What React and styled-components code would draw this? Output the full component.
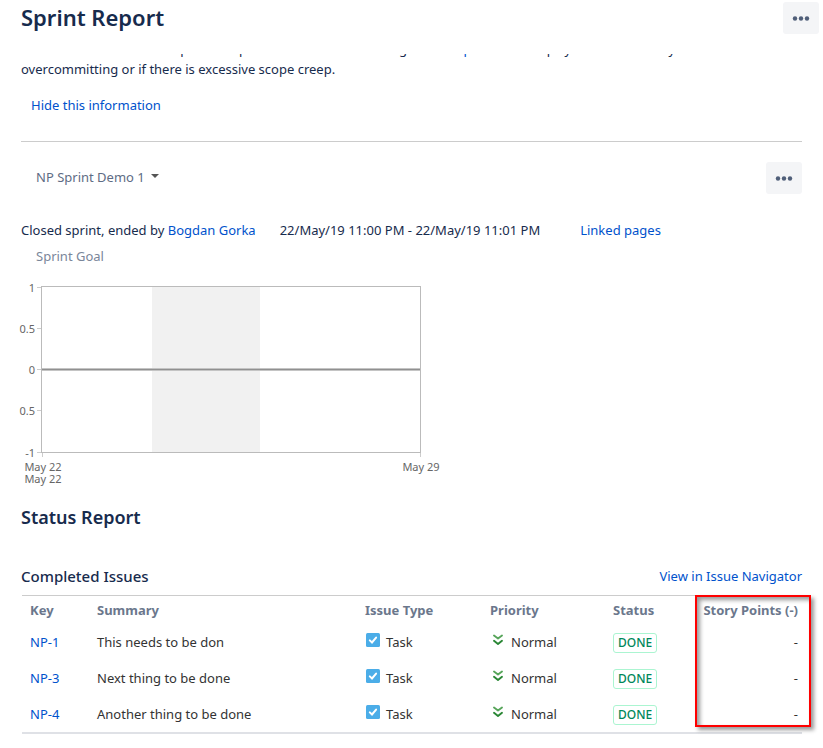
import React from 'react';
import styled, { createGlobalStyle } from 'styled-components';

const GlobalStyle = createGlobalStyle`
  *, *::before, *::after { box-sizing: border-box; }
  body {
    margin: 0;
    background: #fff;
    color: #172b4d;
    font: 13px/20px "Noto Sans", "Open Sans", sans-serif;
  }
  h1, h2, h3, p { margin: 0; }
`;

const Page = styled.div`
  padding: 2px 4px 12px 21px;
`;

const PageHeader = styled.header`
  display: flex;
  justify-content: space-between;
  align-items: flex-start;
  height: 52px;
`;

const PageTitle = styled.h1`
  font-size: 22px;
  font-weight: 600;
  line-height: 30px;
`;

const Body = styled.main`
  padding-right: 17px;
`;

const MoreButton = styled.button`
  display: flex;
  align-items: center;
  justify-content: center;
  width: 36px;
  height: 32px;
  padding: 0;
  border: 0;
  border-radius: 3px;
  background: #f4f5f7;
  color: #505f79;
  cursor: pointer;
`;

const Link = styled.a`
  color: #0052cc;
  text-decoration: none;
  &:hover { text-decoration: underline; }
`;

const InfoPanel = styled.section`
  overflow: hidden;
  padding-bottom: 26px;
  border-bottom: 1px solid #ccc;
`;

const InfoText = styled.p`
  margin-top: -15px;
  margin-bottom: 16px;
`;

const HideLink = styled(Link)`
  display: inline-block;
  margin-left: 10px;
`;

const SprintBar = styled.div`
  display: flex;
  justify-content: space-between;
  align-items: flex-start;
  padding: 20px 0 26px;
`;

const SprintPicker = styled.button`
  display: flex;
  align-items: center;
  gap: 6px;
  padding: 5px 15px;
  border: 0;
  background: none;
  color: #5e6c84;
  font: inherit;
  cursor: pointer;
`;

const SprintMeta = styled.div`
  display: flex;
  flex-wrap: wrap;
`;

const MetaItem = styled.span`
  margin-right: ${(p) => p.$gap}px;
`;

const SprintGoal = styled.p`
  margin: 6px 15px 0;
  color: #7a869a;
`;

const Chart = styled.svg`
  display: block;
  margin: 16px 0 14px;
  overflow: visible;
  font-size: 11px;
  fill: #666;
`;

const SectionTitle = styled.h2`
  font-size: 18px;
  font-weight: 600;
  line-height: 28px;
`;

const TableHeading = styled.div`
  display: flex;
  justify-content: space-between;
  align-items: center;
  margin-top: 35px;
  padding-bottom: 9px;
`;

const TableTitle = styled.h3`
  font-size: 15px;
  font-weight: 500;
  line-height: 20px;
`;

const TableFrame = styled.div`
  position: relative;
  margin-left: 1px;
`;

const IssueTable = styled.table`
  width: 100%;
  border-collapse: separate;
  border-spacing: 0;
  border-top: 1px solid #ccc;
  border-bottom: 2px solid #dfe1e6;
  table-layout: fixed;
`;

const Col = styled.col`
  width: ${(p) => (p.$width ? `${p.$width}px` : 'auto')};
`;

const HeadCell = styled.th`
  height: 28px;
  padding: 0 4px 0 8px;
  color: #6b778c;
  font-weight: 700;
  text-align: ${(p) => (p.$end ? 'right' : 'left')};
  white-space: nowrap;
  ${(p) => p.$end && 'padding-left: 0;'}
`;

const Cell = styled.td`
  height: 36px;
  padding: 0 4px 0 8px;
  color: #333;
  text-align: ${(p) => (p.$end ? 'right' : 'left')};
`;

const IconLabel = styled.span`
  display: flex;
  align-items: center;
  gap: 6px;
  svg { margin-bottom: 4px; }
`;

const Lozenge = styled.span`
  display: inline-block;
  padding: 0 4px;
  border: 1px solid #abf5d1;
  border-radius: 3px;
  color: #00875a;
  font-size: 12px;
  font-weight: 500;
  line-height: 18px;
  vertical-align: middle;
`;

const Highlight = styled.div`
  position: absolute;
  top: 0;
  right: -9px;
  bottom: 7px;
  width: 116px;
  border: 2px solid #f00;
  box-shadow: 3px 3px 4px rgba(0, 0, 0, 0.4), inset 3px 3px 4px rgba(0, 0, 0, 0.4);
  pointer-events: none;
`;

function Dots() {
  return (
    <svg width="18" height="6" viewBox="0 0 18 6" fill="currentColor" aria-hidden="true">
      <circle cx="3" cy="3.5" r="2.2" />
      <circle cx="9" cy="3.5" r="2.2" />
      <circle cx="15" cy="3.5" r="2.2" />
    </svg>
  );
}

function Caret() {
  return (
    <svg width="8" height="6" viewBox="0 0 8 6" aria-hidden="true">
      <path d="M0 0h8L4 4z" fill="#555" />
    </svg>
  );
}

function TaskIcon() {
  return (
    <svg width="15" height="14" viewBox="0 0 15 14" aria-hidden="true">
      <rect x="1" width="14" height="14" rx="1.5" fill="#4bade8" />
      <path d="M4.8 7.4 7 9.5l4.1-4.9" fill="none" stroke="#fff" strokeWidth="2" strokeLinecap="round" />
    </svg>
  );
}

function PriorityIcon() {
  return (
    <svg width="15" height="12" viewBox="0 0 15 12" fill="none" strokeWidth="1.9" strokeLinecap="round" strokeLinejoin="round" aria-hidden="true">
      <path d="M4 1.5l4 3 4-3" stroke="#57a55a" />
      <path d="M4 6.8l4 3.2 4-3.2" stroke="#2a8735" />
    </svg>
  );
}

const yTicks = [
  { y: 5, label: '1' },
  { y: 46, label: '0.5' },
  { y: 87, label: '0' },
  { y: 128, label: '0.5' },
  { y: 170, label: '-1' },
];

function BurndownChart() {
  return (
    <Chart width="420" height="207" role="img" aria-label="Sprint burndown">
      <rect x="131" y="4" width="108" height="166" fill="#f1f1f1" />
      <rect x="20.5" y="4.5" width="379" height="166" fill="none" stroke="#bbb" />
      <path d="M21 87.5h378" stroke="#c4c4c4" strokeWidth="3" />
      <path d="M21 87.5h378" stroke="#909090" />
      {yTicks.map(({ y, label }) => (
        <g key={y}>
          <path d={`M16 ${y + 0.5}h4`} stroke="#ccc" />
          <text x="14" y={y + 5} textAnchor="end">{label}</text>
        </g>
      ))}
      <path d="M21.5 171v4M399.5 171v4" stroke="#ccc" />
      <text x="22" y="189" textAnchor="middle">May 22</text>
      <text x="22" y="201" textAnchor="middle">May 22</text>
      <text x="400" y="189" textAnchor="middle">May 29</text>
    </Chart>
  );
}

const issues = [
  { id: 'NP-1', summary: 'This needs to be don' },
  { id: 'NP-3', summary: 'Next thing to be done' },
  { id: 'NP-4', summary: 'Another thing to be done' },
];

export default function App() {
  return (
    <>
      <GlobalStyle />
      <Page>
        <PageHeader>
          <PageTitle>Sprint Report</PageTitle>
          <MoreButton type="button" aria-label="Report actions"><Dots /></MoreButton>
        </PageHeader>
        <Body>
          <InfoPanel>
            <InfoText>
              Understand the work completed or pushed back to the backlog in each <Link href="#sprint">sprint</Link>. This
              helps you determine if your team is overcommitting or if there is excessive scope creep.
            </InfoText>
            <HideLink href="#hide">Hide this information</HideLink>
          </InfoPanel>

          <SprintBar>
            <SprintPicker type="button">NP Sprint Demo 1 <Caret /></SprintPicker>
            <MoreButton type="button" aria-label="Sprint actions"><Dots /></MoreButton>
          </SprintBar>

          <SprintMeta>
            <MetaItem $gap={24}>Closed sprint, ended by <Link href="#user">Bogdan Gorka</Link></MetaItem>
            <MetaItem $gap={40}>22/May/19 11:00 PM - 22/May/19 11:01 PM</MetaItem>
            <Link href="#pages">Linked pages</Link>
          </SprintMeta>
          <SprintGoal>Sprint Goal</SprintGoal>

          <BurndownChart />

          <SectionTitle>Status Report</SectionTitle>
          <TableHeading>
            <TableTitle>Completed Issues</TableTitle>
            <Link href="#navigator">View in Issue Navigator</Link>
          </TableHeading>
          <TableFrame>
            <IssueTable>
              <colgroup>
                <Col $width={67} />
                <Col />
                <Col $width={125} />
                <Col $width={123} />
                <Col $width={86} />
                <Col $width={111} />
              </colgroup>
              <thead>
                <tr>
                  <HeadCell>Key</HeadCell>
                  <HeadCell>Summary</HeadCell>
                  <HeadCell>Issue Type</HeadCell>
                  <HeadCell>Priority</HeadCell>
                  <HeadCell>Status</HeadCell>
                  <HeadCell $end>Story Points (-)</HeadCell>
                </tr>
              </thead>
              <tbody>
                {issues.map(({ id, summary }) => (
                  <tr key={id}>
                    <Cell><Link href={`#${id}`}>{id}</Link></Cell>
                    <Cell>{summary}</Cell>
                    <Cell><IconLabel><TaskIcon />Task</IconLabel></Cell>
                    <Cell><IconLabel><PriorityIcon />Normal</IconLabel></Cell>
                    <Cell><Lozenge>DONE</Lozenge></Cell>
                    <Cell $end>-</Cell>
                  </tr>
                ))}
              </tbody>
            </IssueTable>
            <Highlight />
          </TableFrame>
        </Body>
      </Page>
    </>
  );
}
